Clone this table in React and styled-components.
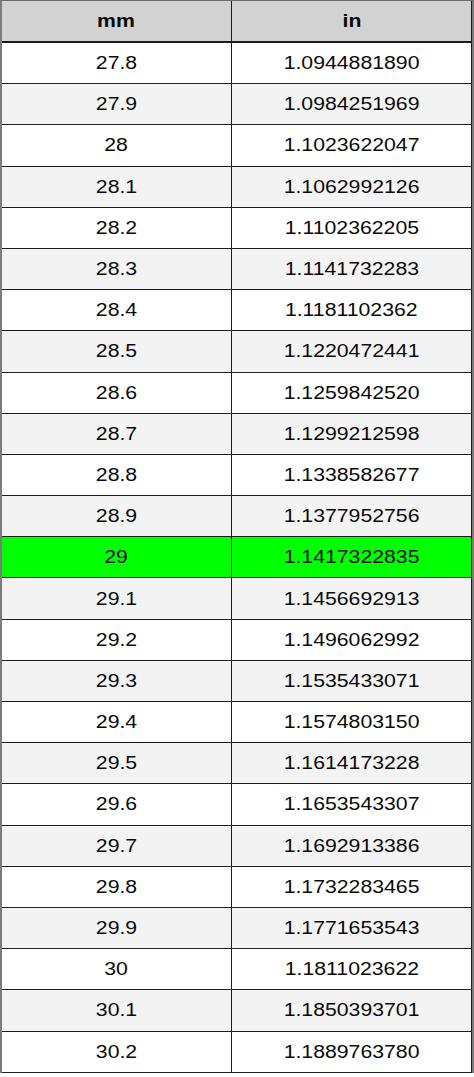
import React from "react";
import styled, { createGlobalStyle } from "styled-components";

const GlobalStyle = createGlobalStyle`
  html, body {
    margin: 0;
    padding: 0;
    background: #ffffff;
  }
  body {
    font-family: "Liberation Sans", Arial, sans-serif;
  }
`;

const Frame = styled.div`
  width: 474px;
  box-sizing: border-box;
  border-left: 2px solid #7c7c7c;
  border-right: 2px solid #7c7c7c;
  border-top: 1px solid #6a6a6a;
`;

const Row = styled.div`
  display: grid;
  grid-template-columns: 230px 1fr;
  box-sizing: border-box;
  height: ${(p) => (p.$head ? "42px" : "41.2px")};
  border-bottom: ${(p) => (p.$head ? "2px" : "1px")} solid #1c1c1c;
  background: ${(p) =>
    p.$head ? "#d2d2d2" : p.$active ? "#00ff00" : p.$alt ? "#f3f3f3" : "#ffffff"};
`;

const Cell = styled.div`
  display: flex;
  align-items: center;
  justify-content: center;
  border-right: 1px solid #1c1c1c;
  color: #0a0a0a;
  font-size: 18px;
  font-weight: ${(p) => (p.$head ? 700 : 400)};
  overflow: hidden;
`;

const Text = styled.span`
  display: inline-block;
  transform: scaleX(1.18);
  line-height: 1;
`;

const rows = [
  ["27.8", "1.0944881890"],
  ["27.9", "1.0984251969"],
  ["28", "1.1023622047"],
  ["28.1", "1.1062992126"],
  ["28.2", "1.1102362205"],
  ["28.3", "1.1141732283"],
  ["28.4", "1.1181102362"],
  ["28.5", "1.1220472441"],
  ["28.6", "1.1259842520"],
  ["28.7", "1.1299212598"],
  ["28.8", "1.1338582677"],
  ["28.9", "1.1377952756"],
  ["29", "1.1417322835"],
  ["29.1", "1.1456692913"],
  ["29.2", "1.1496062992"],
  ["29.3", "1.1535433071"],
  ["29.4", "1.1574803150"],
  ["29.5", "1.1614173228"],
  ["29.6", "1.1653543307"],
  ["29.7", "1.1692913386"],
  ["29.8", "1.1732283465"],
  ["29.9", "1.1771653543"],
  ["30", "1.1811023622"],
  ["30.1", "1.1850393701"],
  ["30.2", "1.1889763780"],
];

export default function App() {
  return (
    <>
      <GlobalStyle />
      <Frame>
        <Row $head>
          <Cell $head>
            <Text>mm</Text>
          </Cell>
          <Cell $head>
            <Text>in</Text>
          </Cell>
        </Row>
        {rows.map(([mm, inch], i) => (
          <Row key={mm} $alt={i % 2 === 1} $active={mm === "29"}>
            <Cell>
              <Text>{mm}</Text>
            </Cell>
            <Cell>
              <Text>{inch}</Text>
            </Cell>
          </Row>
        ))}
      </Frame>
    </>
  );
}
